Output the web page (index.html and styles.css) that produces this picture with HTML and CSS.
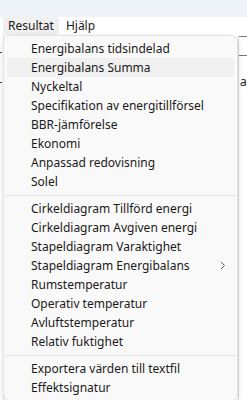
FILE: index.html
```html
<!DOCTYPE html>
<html lang="sv">
<head>
    <meta charset="UTF-8">
    <title>Resultat</title>
    <link rel="stylesheet" href="styles.css">
</head>
<body>
    <div class="titlebar"></div>
    <div class="menubar">
        <span class="menu-item active">Resultat</span>
        <span class="menu-item">Hjälp</span>
    </div>
    <div class="content">
        <div class="side-left">
            <span class="mark"></span>
            <span class="mark mark-low"></span>
        </div>
        <div class="side-right">
            <div class="grid-line"></div>
            <div class="grid-line second"></div>
            <div class="grid-text">a</div>
        </div>
    </div>

    <div class="dropdown">
        <div class="entry">Energibalans tidsindelad</div>
        <div class="entry hover">Energibalans Summa</div>
        <div class="entry">Nyckeltal</div>
        <div class="entry">Specifikation av energitillförsel</div>
        <div class="entry">BBR-jämförelse</div>
        <div class="entry">Ekonomi</div>
        <div class="entry">Anpassad redovisning</div>
        <div class="entry">Solel</div>
        <div class="separator"></div>
        <div class="entry">Cirkeldiagram Tillförd energi</div>
        <div class="entry">Cirkeldiagram Avgiven energi</div>
        <div class="entry">Stapeldiagram Varaktighet</div>
        <div class="entry submenu">Stapeldiagram Energibalans
            <svg class="chevron" width="6" height="9" viewBox="0 0 6 9"><path d="M1 1 L4.5 4.5 L1 8" fill="none" stroke="#555" stroke-width="1"/></svg>
        </div>
        <div class="entry">Rumstemperatur</div>
        <div class="entry">Operativ temperatur</div>
        <div class="entry">Avluftstemperatur</div>
        <div class="entry">Relativ fuktighet</div>
        <div class="separator"></div>
        <div class="entry">Exportera värden till textfil</div>
        <div class="entry">Effektsignatur</div>
    </div>
</body>
</html>
```

FILE: styles.css
```css
body {
    margin: 0;
    background-color: white;
    font-family: "Noto Sans", "Open Sans", sans-serif;
    font-size: 12px;
    color: #1a1a1a;
    position: relative;
    height: 400px;
    overflow: hidden;
}
.titlebar {
    height: 17px;
    background-color: #eef2f9;
}
.menubar {
    height: 18px;
    display: flex;
    align-items: center;
    padding-left: 3px;
    gap: 2px;
    background-color: white;
}
.menu-item {
    padding: 0 5px;
    height: 18px;
    line-height: 18px;
    border-radius: 3px;
}
.menu-item.active {
    background-color: #f0f0f0;
}
.content {
    display: flex;
    justify-content: space-between;
    height: 365px;
}
.side-left {
    width: 3px;
    border-right: 1px solid #e8e8e8;
}
.mark {
    display: block;
    margin-top: 17px;
    height: 1px;
    background-color: #444;
    width: 2px;
}
.mark-low {
    margin-top: 29px;
}
.side-right {
    width: 8px;
    border-left: 1px solid #dcdcdc;
    margin-top: 1px;
}
.grid-line {
    height: 1px;
    background-color: #777;
}
.grid-line.second {
    margin-top: 18px;
}
.grid-text {
    margin-top: 17px;
    padding-left: 1px;
}

.dropdown {
    position: absolute;
    left: 3px;
    top: 35px;
    width: 233px;
    padding: 3px 0 3px;
    background-color: #f9f9f9;
    border: 1px solid #e3e3e3;
    border-radius: 7px;
    box-shadow: 0 2px 6px rgba(0, 0, 0, 0.12);
}
.entry {
    height: 19px;
    line-height: 19px;
    margin: 0 3px;
    padding-left: 24px;
    padding-right: 8px;
    border-radius: 4px;
    display: flex;
    align-items: center;
    justify-content: space-between;
    white-space: nowrap;
}
.entry.hover {
    background-color: #f0f0f0;
}
.separator {
    height: 1px;
    background-color: #e0e0e0;
    margin: 4px 1px 3px;
}
.chevron {
    display: block;
}
```
